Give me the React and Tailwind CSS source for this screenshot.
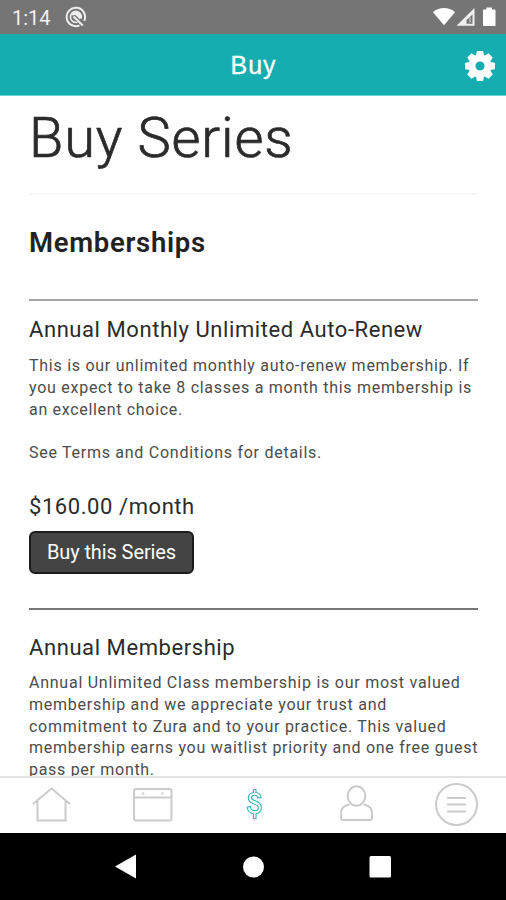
function Rule({ className }) {
  return <div className={`shrink-0 ${className}`} />;
}

function Lines({ lines, className }) {
  return (
    <div className={`whitespace-nowrap text-[#4c4c4c] text-[16px] leading-[21.75px] ${className}`}>
      {lines.map(([text, tracking], i) => (
        <div key={i} className={tracking}>{text || "\u00a0"}</div>
      ))}
    </div>
  );
}

function StatusBar() {
  return (
    <div className="flex h-[34px] shrink-0 items-center bg-[#757575] pl-3 pr-[10px] text-[#f1f1f1]">
      <span className="w-[53px] text-[20px] leading-[34px] tracking-[0px] pt-[2px]">1:14</span>
      <svg className="h-[22px] w-[22px]" viewBox="0 0 22 22" fill="none">
        <path d="M14.500 19.400A9.200 9.200 0 1 1 19.200 14.800" stroke="#efefef" strokeWidth="2" />
        <path d="M12.500 16.200A5.500 5.500 0 1 1 16.200 12.500" stroke="#efefef" strokeWidth="1.600" />
        <path d="M6.500 9.500a5 5 0 0 1 9.800 1.600l-1.300 2.300-4.500-4.300z" fill="#efefef" />
        <path d="M8.500 10.500l9.300 9" stroke="#efefef" strokeWidth="2" />
      </svg>
      <div className="flex-1" />
      <svg className="h-[20px] w-[63px]" viewBox="0 0 63 20" fill="#fff">
        <path d="M0 5.2C6.5 -.4 15.5 -.4 22 5.2L11 18.2z" />
        <path fillRule="evenodd" d="M23.5 18.7L41.5 1v17.7zM33.5 16.7h6V7.5l-6 5.5z" fill="#efefef" />
        <path d="M37 10.5v5" stroke="#d0d0d0" strokeWidth="1.2" />
        <path d="M51 2.5h2.5V.5h5.5v2h2.5c.5 0 1 .5 1 1v14.500c0 .6-.4 1-1 1H51c-.6 0-1-.4-1-1V3.500c0-.5.500-1 1-1z" />
      </svg>
    </div>
  );
}

function Gear() {
  const angles = [0, 45, 90, 135, 180, 225, 270, 315];
  return (
    <svg className="h-[30px] w-[30px]" viewBox="-15 -15 30 30">
      {angles.map((a) => (
        <path key={a} d="M-4.300 -9L-3.200 -14.500Q-3.100 -15 -2.600 -15H2.600Q3.100 -15 3.200 -14.500L4.300 -9z" fill="#fff" transform={`rotate(${a})`} />
      ))}
      <circle r="8" fill="none" stroke="#fff" strokeWidth="6.800" />
    </svg>
  );
}

function TabBar() {
  return (
    <div className="h-[57px] shrink-0 border-t-2 border-[#e3e3e3] bg-white">
      <svg className="block h-[55px] w-full" viewBox="0 778 506 55" fill="none" stroke="#cbcbcb" strokeWidth="2">
        <path d="M33 804L51.500 788.500L70 804M37.500 801V820.500H65.500V801" />
        <rect x="134" y="789" width="37.500" height="31.500" rx="2" />
        <path d="M134 797.500H171.500" />
        <circle cx="143" cy="793.500" r="1" strokeWidth="1" />
        <circle cx="162.500" cy="793.500" r="1" strokeWidth="1" />
        <path stroke="#34b3b7" strokeWidth="1.100" d="M253.500 789.500h2.500v3c3 .5 4.900 2.300 5 5l-3 .5c-.5-2-1.800-2.800-3.300-2.800-2 0-3.300 1-3.300 2.500s1.300 2.200 3.700 3.100c3.900 1.400 6.300 3 6.300 6.600 0 3.500-2.300 5.700-5.400 6.300v5h-2.500v-5c-3.700-.5-5.900-2.700-6.200-6.500l3-.7c.5 2.900 2 4.300 4.400 4.300 2.200 0 3.600-1.200 3.600-3s-1.200-2.700-4.300-3.900c-3.500-1.300-5.700-2.800-5.700-6 0-2.900 2-4.900 5.200-5.400z" />
        <path d="M349.500 804.500C338.500 807 341.500 813 341 818Q341 820 343 820H370Q372 820 372 818C371.500 813 374.500 807 363.500 804.500" />
        <ellipse cx="356.500" cy="796" rx="8.800" ry="9.800" />
        <circle cx="456.500" cy="804.500" r="20.500" />
        <path d="M447 798H466M447 804.500H466M447 811.500H466" />
      </svg>
    </div>
  );
}

export default function App() {
  return (
    <div className="flex h-[900px] w-[506px] flex-col overflow-hidden bg-white font-[Roboto,sans-serif]">
      <StatusBar />
      <div className="grid h-[62px] shrink-0 grid-cols-3 items-center border-b border-[#6dd3d7] bg-[#15adb0] pr-[11px] pt-[2px]">
        <span />
        <span className="pl-[12px] text-center font-['Liberation_Sans',sans-serif] text-[25px] tracking-[1px] text-white [-webkit-text-stroke:0.3px_#fff]">Buy</span>
        <span className="flex justify-end"><Gear /></span>
      </div>
      <main className="flex min-h-0 flex-1 flex-col overflow-hidden pl-[29px] pr-[28px] text-[#2b2b2b]">
        <h1 className="mt-[9px] h-[66px] shrink-0 whitespace-nowrap text-[56px] font-light leading-[66px] tracking-[0.8px] [-webkit-text-stroke:0.7px_#2b2b2b]">Buy Series</h1>
        <Rule className="mt-[22px] h-[2px] bg-[#f7f7f7]" />
        <h2 className="mt-[31px] h-[34px] shrink-0 text-[27.500px] font-semibold leading-[34px] tracking-[0.7px] text-[#222]">Memberships</h2>
        <Rule className="mt-[39px] h-[2px] bg-[#a5a5a5]" />
        <h3 className="mt-[15px] h-[28px] shrink-0 whitespace-nowrap text-[22px] leading-[28px] tracking-[0.57px]">Annual Monthly Unlimited Auto-Renew</h3>
        <Lines
          className="mt-[11px] h-[109px] shrink-0"
          lines={[
            ["This is our unlimited monthly auto-renew membership. If", "tracking-[0.73px]"],
            ["you expect to take 8 classes a month this membership is", "tracking-[0.73px]"],
            ["an excellent choice.", "tracking-[0.68px]"],
            ["", ""],
            ["See Terms and Conditions for details.", "tracking-[0.73px]"],
          ]}
        />
        <div className="mt-[29px] h-[28px] shrink-0 text-[22px] leading-[28px] tracking-[0.57px]">$160.00 /month</div>
        <button className="mt-[10px] h-[43px] w-[165px] shrink-0 rounded-[6px] border-2 border-[#1c1c1c] bg-[#444] pb-[1px] text-[20px] leading-[38px] tracking-[-0.1px] text-white">Buy this Series</button>
        <Rule className="mt-[34px] h-[2px] bg-[#777]" />
        <h3 className="mt-[24px] h-[28px] shrink-0 whitespace-nowrap text-[22px] leading-[28px] tracking-[0.58px]">Annual Membership</h3>
        <Lines
          className="mt-[10px] shrink-0"
          lines={[
            ["Annual Unlimited Class membership is our most valued", "tracking-[0.75px]"],
            ["membership and we appreciate your trust and", "tracking-[0.75px]"],
            ["commitment to Zura and to your practice. This valued", "tracking-[0.74px]"],
            ["membership earns you waitlist priority and one free guest", "tracking-[0.73px]"],
            ["pass per month.", "tracking-[0.7px]"],
          ]}
        />
      </main>
      <TabBar />
      <div className="h-[67px] shrink-0 bg-black">
        <svg className="block h-[67px] w-full" viewBox="0 833 506 67" fill="#fff">
          <path d="M115 866.500L136 854.500V878.500z" />
          <circle cx="253.500" cy="867" r="10.500" />
          <rect x="369.500" y="856" width="21.500" height="21.500" rx="1.500" />
        </svg>
      </div>
    </div>
  );
}
